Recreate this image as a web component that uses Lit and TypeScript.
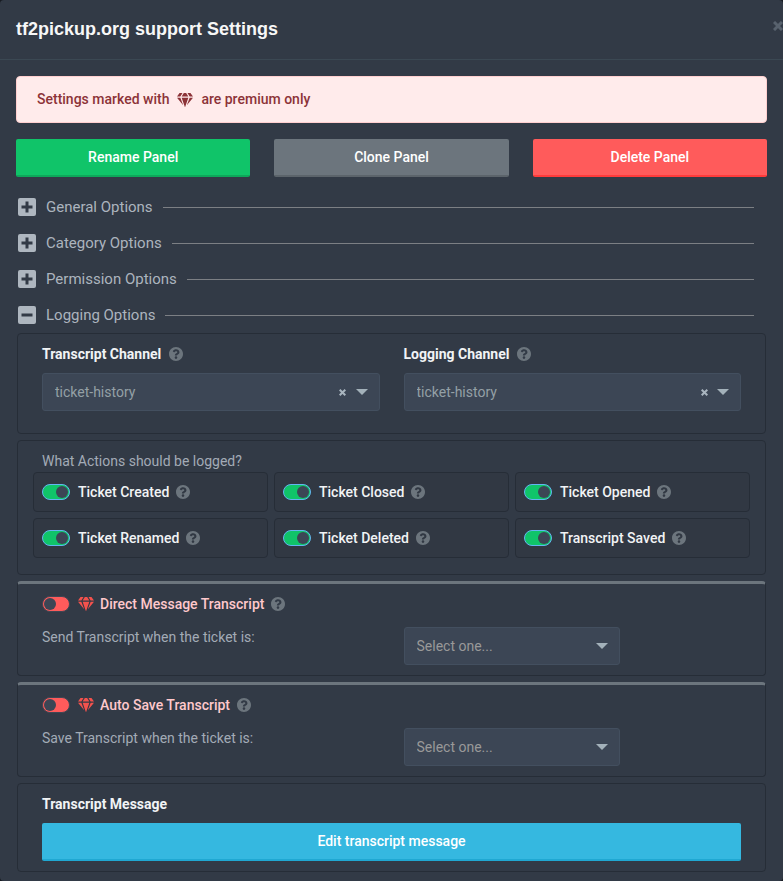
import { LitElement, html, css, svg } from "lit";
import { customElement, property, state } from "lit/decorators.js";

const gem = svg`<path d="M18.5 0h-4.1l3 5h4.6zM12.6 0H9.4L6.4 5h9.2zM7.6 0H3.5L0 5h4.6zM0 6.500l8.2 10.2c.1.1.3 0 .2-.1L4.6 6.500zM6.400 6.500l4.400 12.900c.1.2.3.2.4 0l4.400-12.900zM17.400 6.500l-3.800 10.100c-.1.1.1.2.2.1L22 6.500z"/>`;

@customElement("gem-icon")
class GemIcon extends LitElement {
  static styles = css`
    :host { display: inline-flex; flex: none; }
    .gem { width: 16px; height: 14px; fill: currentColor; }
  `;
  render() {
    return html`<svg class="gem" viewBox="0 0 22 19.500" preserveAspectRatio="none" aria-hidden="true">${gem}</svg>`;
  }
}

@customElement("help-icon")
class HelpIcon extends LitElement {
  static styles = css`
    :host { display: inline-flex; flex: none; color: #6c757d; }
    .help { width: 14px; height: 14px; fill: currentColor; }
  `;
  render() {
    return html`<svg class="help" viewBox="8 8 496 496" aria-hidden="true">
      <path d="M504 256c0 136.997-111.043 248-248 248S8 392.997 8 256C8 119.083 119.043 8 256 8s248 111.083 248 248zM262.655 90c-54.497 0-89.255 22.957-116.549 63.758-3.536 5.286-2.353 12.415 2.715 16.258l34.699 26.310c5.205 3.947 12.621 3.008 16.665-2.122 17.864-22.658 30.113-35.797 57.303-35.797 20.429 0 45.698 13.148 45.698 32.958 0 14.976-12.363 22.667-32.534 33.976C247.128 238.528 216 254.941 216 296v4c0 6.627 5.373 12 12 12h56c6.627 0 12-5.373 12-12v-1.333c0-28.462 83.186-29.647 83.186-106.667 0-58.002-60.165-102-116.531-102zM256 338c-25.365 0-46 20.635-46 46 0 25.364 20.635 46 46 46s46-20.636 46-46c0-25.365-20.635-46-46-46z"/>
    </svg>`;
  }
}

@customElement("option-toggle")
class OptionToggle extends LitElement {
  @property() label = "";
  @property({ type: Boolean }) on = false;
  @property({ type: Boolean }) premium = false;
  static styles = css`
    :host { display: flex; align-items: center; gap: 7px; min-width: 0; }
    .option { display: flex; align-items: center; gap: 8px; line-height: 20px; white-space: nowrap; }
    .name { display: flex; align-items: center; gap: 6px; font-weight: 500; color: #f1f3f5; }
    .premium .name { color: #ffc8cc; }
    .premium gem-icon { color: #f4524d; }
    .switch {
      appearance: none; box-sizing: border-box; flex: none; display: flex; align-items: center;
      width: 28px; height: 16px; margin: 0; padding: 0 1px;
      border: 1px solid #3f4654; border-radius: 8px; background: #ff5b5b; cursor: pointer;
    }
    .switch::before { content: ""; width: 12px; height: 12px; border-radius: 50%; background: #3c4655; }
    .switch:checked { justify-content: flex-end; background: #10c469; border-color: #64b5f0; }
  `;
  render() {
    return html`
      <label class="option ${this.premium ? "premium" : ""}">
        <input class="switch" type="checkbox" role="switch" .checked=${this.on} />
        <span class="name">${this.premium ? html`<gem-icon></gem-icon>` : ""}${this.label}</span>
      </label>
      <help-icon></help-icon>
    `;
  }
}

@customElement("option-select")
class OptionSelect extends LitElement {
  @property() label = "";
  @property() value = "";
  @property({ type: Boolean }) clearable = false;
  static styles = css`
    :host { display: block; }
    .box { position: relative; }
    .select {
      appearance: none; box-sizing: border-box; display: block; width: 100%; height: 38px;
      padding: 0 52px 0 12px; border: 1px solid #434f5f; border-radius: 3px;
      background: #3c4655; color: #94a0a6; font: inherit; line-height: 20px;
    }
    .empty { color: #999; }
    .caret { position: absolute; right: 12px; top: 16px; width: 12px; height: 6px; fill: #a3b1ba; pointer-events: none; }
    .clear {
      position: absolute; right: 31px; top: 10px; width: 12px; height: 18px; padding: 0;
      display: grid; place-items: center; border: 0; background: none; cursor: pointer;
    }
    .cross { width: 7px; height: 7px; stroke: #a9b5bf; stroke-width: 2; }
  `;
  render() {
    return html`<div class="box">
      <select class="select ${this.clearable ? "" : "empty"}" aria-label=${this.label}>
        <option>${this.value}</option>
      </select>
      ${this.clearable
        ? html`<button class="clear" type="button" aria-label="Clear ${this.label}">
            <svg class="cross" viewBox="0 0 7 7"><path d="M.7.7l5.600 5.600M6.300.7L.7 6.300" /></svg>
          </button>`
        : ""}
      <svg class="caret" viewBox="0 0 12 6" aria-hidden="true"><path d="M0 0h12L6 6z" /></svg>
    </div>`;
  }
}

@customElement("app-root")
class AppRoot extends LitElement {
  @state() private sections = [
    { name: "General Options", open: false },
    { name: "Category Options", open: false },
    { name: "Permission Options", open: false },
    { name: "Logging Options", open: true },
  ];
  private actions = [
    "Ticket Created", "Ticket Closed", "Ticket Opened",
    "Ticket Renamed", "Ticket Deleted", "Transcript Saved",
  ];
  private premium = [
    { name: "Direct Message Transcript", hint: "Send Transcript when the ticket is:" },
    { name: "Auto Save Transcript", hint: "Save Transcript when the ticket is:" },
  ];

  static styles = css`
    :host {
      display: block; min-height: 100vh; background: #171b21;
      font: 14px/20px Roboto, "Liberation Sans", sans-serif; color: #a3abb6;
    }
    .dialog { box-sizing: border-box; min-height: 100vh; background: #323a46; border-radius: 4px; overflow: hidden; }
    .header {
      display: flex; justify-content: space-between; align-items: flex-start;
      padding: 17px 0 18px 16px; border-bottom: 1px solid #3b4853;
    }
    .title { margin: 0; font: bold 18px/24px "Liberation Sans", Arial, sans-serif; color: #f7f7f7; }
    .close { border: 0; background: none; padding: 4px 0; display: flex; cursor: pointer; }
    .close-icon { width: 10px; height: 10px; stroke: #58626e; stroke-width: 3; }
    .body { padding: 16px 16px 8px; }
    .alert {
      display: flex; align-items: center; gap: 8px; padding: 13px 20px; margin-bottom: 16px;
      border: 1px solid #ffcfcf; border-radius: 4px; background: #ffebeb; color: #8c3338; font-weight: 500;
      line-height: 19px;
    }
    .buttons { display: grid; grid-template-columns: repeat(3, 1fr); gap: 24px; margin-bottom: 12px; }
    .btn {
      box-sizing: border-box; width: 100%; height: 38px; padding: 0; border: 0; border-bottom: 2px solid; border-radius: 2px;
      font: 500 14px/20px Roboto, sans-serif; color: #fff; cursor: pointer;
    }
    .rename { background: #10c469; border-color: #0ea75a; }
    .clone { background: #6c757d; border-color: #5c646b; }
    .delete { background: #ff5b5b; border-color: #ff3b3b; }
    .edit { background: #35b8e0; border-color: #20a8d2; }
    .section {
      display: flex; align-items: center; gap: 10px; width: 100%; height: 36px; padding: 0 13px 0 2px;
      border: 0; background: none; color: #acb4be; font: 15px/20px Roboto, sans-serif; cursor: pointer;
    }
    .section::after { content: ""; flex: 1; height: 1px; background: #7c7f84; }
    .fold { width: 18px; height: 18px; flex: none; }
    .fold-box { fill: #aeb6bf; }
    .fold-sign { stroke: #323a46; stroke-width: 3; }
    .panels { display: flex; flex-direction: column; gap: 6px; margin: 0 1px; }
    .panels[hidden] { display: none; }
    .panel { border: 1px solid #262d37; border-radius: 4px; padding: 0 24px 10px; }
    .pair { display: grid; grid-template-columns: 1fr 1fr; column-gap: 24px; }
    .channels { padding: 10px 24px 22px; }
    .label { display: flex; align-items: center; gap: 8px; margin-bottom: 9px; font-weight: 700; color: #f1f3f5; }
    .log { padding: 10px 15px 16px; }
    .question { margin: 0 9px 1px; }
    .actions { display: grid; grid-template-columns: repeat(3, 1fr); gap: 6px; }
    .action { display: flex; align-items: center; box-sizing: border-box; height: 40px; padding: 0 8px; border: 1px solid #262d37; border-radius: 4px; background: #313843; }
    .paid { border-top: 3px solid #6c757d; padding-top: 10px; }
    .paid .pair { margin-top: 13px; }
    .narrow { width: 64%; }
    .message { padding-top: 10px; }
  `;

  private toggle(index: number) {
    this.sections = this.sections.map((s, i) => (i === index ? { ...s, open: !s.open } : s));
  }

  private channel(name: string) {
    return html`<div>
      <div class="label">${name}<help-icon></help-icon></div>
      <option-select label=${name} value="ticket-history" clearable></option-select>
    </div>`;
  }

  render() {
    return html`<main class="dialog">
      <header class="header">
        <h1 class="title">tf2pickup.org support Settings</h1>
        <button class="close" type="button" aria-label="Close">
          <svg class="close-icon" viewBox="0 0 10 10"><path d="M1 1l8 8M9 1L1 9" /></svg>
        </button>
      </header>
      <div class="body">
        <div class="alert" role="alert">Settings marked with <gem-icon></gem-icon> are premium only</div>
        <div class="buttons">
          <button class="btn rename" type="button">Rename Panel</button>
          <button class="btn clone" type="button">Clone Panel</button>
          <button class="btn delete" type="button">Delete Panel</button>
        </div>
        ${this.sections.map(
          (s, i) => html`<button class="section" type="button" aria-expanded=${s.open} @click=${() => this.toggle(i)}>
            <svg class="fold" viewBox="0 0 18 18" aria-hidden="true">
              <rect class="fold-box" width="18" height="18" rx="2" />
              <path class="fold-sign" d=${s.open ? "M3.500 9h11" : "M3.500 9h11M9 3.500v11"} />
            </svg>
            ${s.name}
          </button>`,
        )}
        <div class="panels" ?hidden=${!this.sections[3].open}>
          <section class="panel pair channels">
            ${this.channel("Transcript Channel")} ${this.channel("Logging Channel")}
          </section>
          <section class="panel log">
            <p class="question">What Actions should be logged?</p>
            <div class="actions">
              ${this.actions.map((a) => html`<div class="action"><option-toggle label=${a} on></option-toggle></div>`)}
            </div>
          </section>
          ${this.premium.map(
            (p) => html`<section class="panel paid">
              <option-toggle label=${p.name} premium></option-toggle>
              <div class="pair">
                <span>${p.hint}</span>
                <option-select class="narrow" label=${p.hint} value="Select one..."></option-select>
              </div>
            </section>`,
          )}
          <section class="panel message">
            <div class="label">Transcript Message</div>
            <button class="btn edit" type="button">Edit transcript message</button>
          </section>
        </div>
      </div>
    </main>`;
  }
}
